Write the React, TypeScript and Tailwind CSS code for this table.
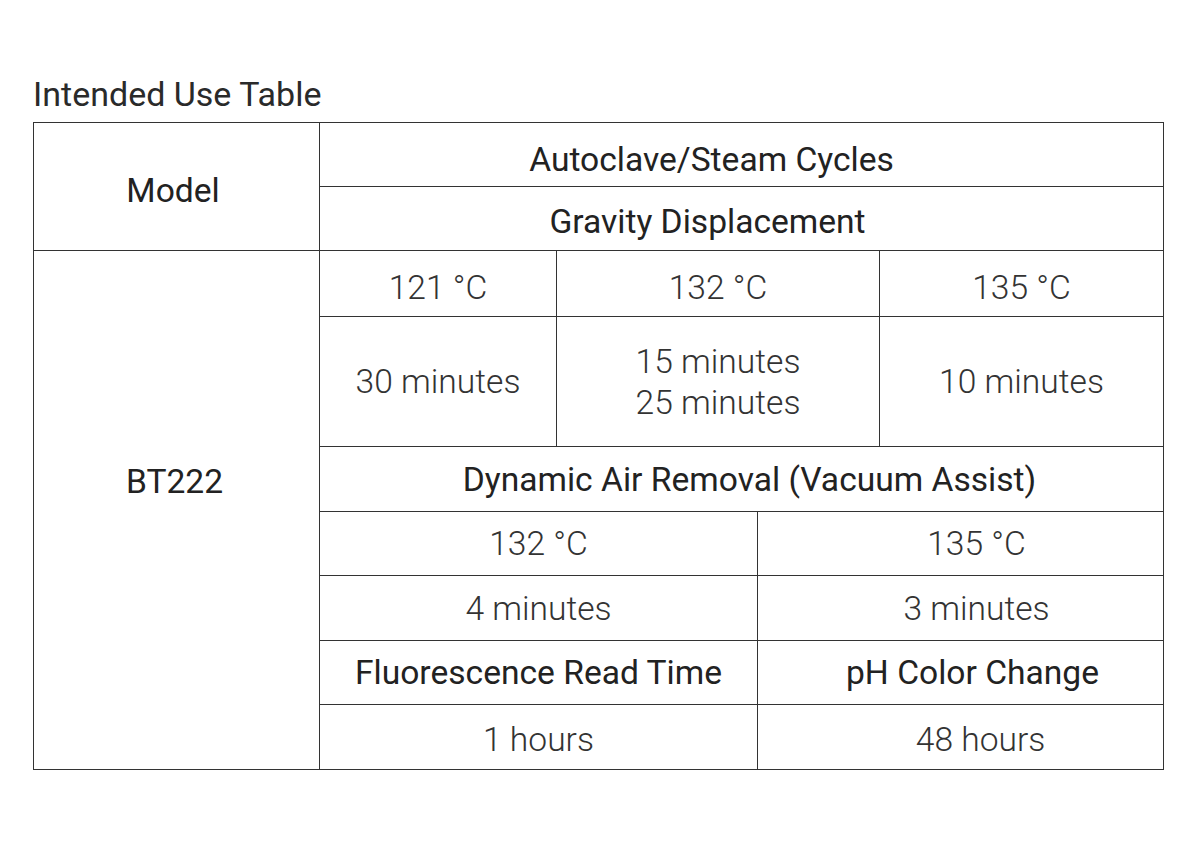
const cell = 'border-[1.5px] border-[#333] text-center align-middle p-0';
const head = `${cell} font-normal text-[#222]`;
const data = `${cell} font-light text-[#333]`;

export default function App() {
  return (
    <div className="min-h-[850px] bg-white pl-[33px] pt-[74px] font-['Roboto',sans-serif] text-[33.6px]">
      <h1 className="h-[40px] text-[34px]/[40px] font-normal text-[#2a2a2a]">
        Intended Use Table
      </h1>
      <table className="mt-[8px] w-[1130px] table-fixed border-collapse leading-[41px]">
        <colgroup>
          <col className="w-[286px]" />
          <col className="w-[237px]" />
          <col className="w-[201px]" />
          <col className="w-[122px]" />
          <col className="w-[284px]" />
        </colgroup>
        <tbody>
          <tr className="h-[64px]">
            <th rowSpan={2} className={`${head} pt-[8px] pr-[7px]`}>
              Model
            </th>
            <th colSpan={4} className={`${head} pr-[60px] pt-[9px]`}>
              Autoclave/Steam Cycles
            </th>
          </tr>
          <tr className="h-[64px]">
            <th colSpan={4} className={`${head} pr-[68px] pt-[6px]`}>
              Gravity Displacement
            </th>
          </tr>
          <tr className="h-[66px]">
            <th rowSpan={7} className={`${head} pb-[58px] pr-[4px]`}>
              BT222
            </th>
            <td className={`${data} pt-[8px]`}>121 °C</td>
            <td colSpan={2} className={`${data} pt-[8px]`}>
              132 °C
            </td>
            <td className={`${data} pt-[8px]`}>135 °C</td>
          </tr>
          <tr className="h-[130px]">
            <td className={data}>30 minutes</td>
            <td colSpan={2} className={data}>
              15 minutes
              <br />
              25 minutes
            </td>
            <td className={data}>10 minutes</td>
          </tr>
          <tr className="h-[65px]">
            <th colSpan={4} className={`${head} pl-[16px]`}>
              Dynamic Air Removal (Vacuum Assist)
            </th>
          </tr>
          <tr className="h-[64px]">
            <td colSpan={2} className={data}>
              132 °C
            </td>
            <td colSpan={2} className={`${data} pl-[32px]`}>
              135 °C
            </td>
          </tr>
          <tr className="h-[65px]">
            <td colSpan={2} className={data}>
              4 minutes
            </td>
            <td colSpan={2} className={`${data} pl-[32px]`}>
              3 minutes
            </td>
          </tr>
          <tr className="h-[64px]">
            <th colSpan={2} className={head}>
              Fluorescence Read Time
            </th>
            <th colSpan={2} className={`${head} pl-[24px]`}>
              pH Color Change
            </th>
          </tr>
          <tr className="h-[65px]">
            <td colSpan={2} className={`${data} pt-[4px]`}>
              1 hours
            </td>
            <td colSpan={2} className={`${data} pl-[40px] pt-[4px]`}>
              48 hours
            </td>
          </tr>
        </tbody>
      </table>
    </div>
  );
}
